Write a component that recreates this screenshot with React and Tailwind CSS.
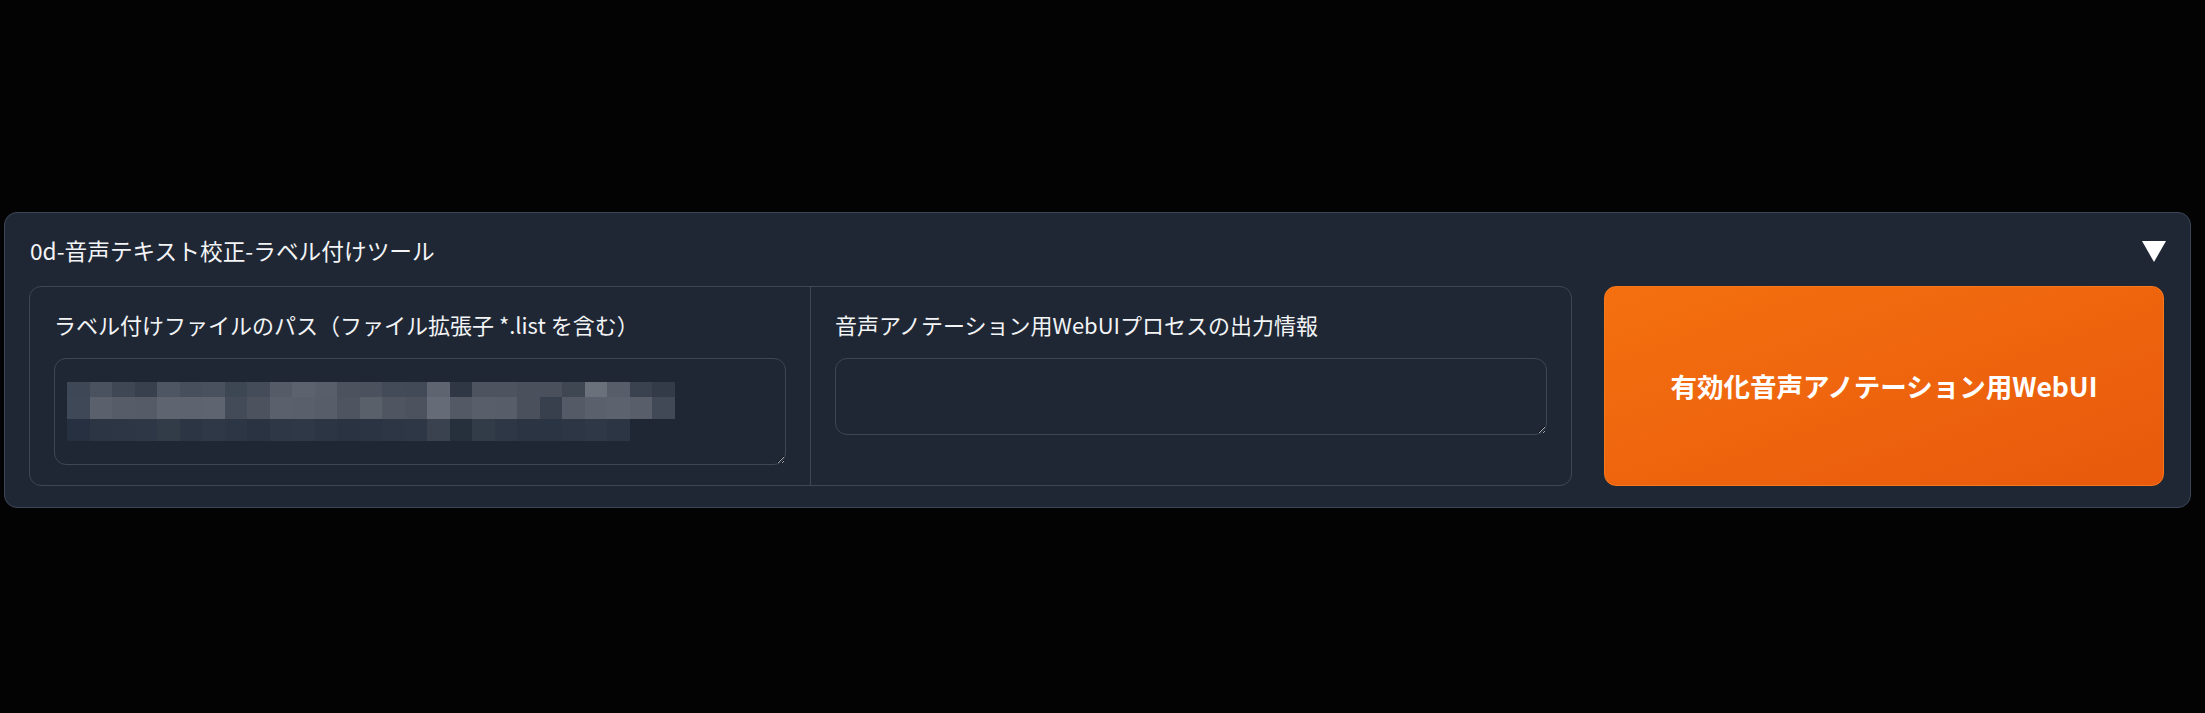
import React from "react";

const row1 = ["#3e4755","#4b525f","#3f4755","#37404c","#4f5663","#474f5c","#4a515e","#3d4653","#444c59","#555c68","#5c636e","#585f6a","#4c535f","#4b525e","#444b58","#434a57","#5e6570","#2f3744","#4d5460","#4d5460","#4a515d","#4a515d","#3f4753","#6b717b","#575e69","#3a4250","#333b48"];
const row2 = ["#3f4856","#5a616c","#565d68","#555c67","#5e6570","#5d646f","#5e6570","#434b58","#4c535f","#5a616c","#595f6b","#575e69","#4e5561","#5a6069","#4f5662","#4c535f","#666c77","#535a66","#585f6a","#575e69","#4a515d","#37404c","#545b67","#5a616c","#5c636e","#595f6a","#414957"];
const row3 = ["#273040","#2c3543","#2d3644","#2e3745","#323b48","#2c3543","#2f3846","#2d3644","#2a3341","#2e3745","#2f3846","#2c3543","#2a3341","#2b3442","#2d3644","#2e3745","#3a4250","#262f3c","#323b48","#2e3745","#2b3442","#2b3442","#2d3644","#2f3846","#2c3543"];

const font = { fontFamily: '"Noto Sans CJK JP", "Noto Sans", sans-serif' };

function Mosaic() {
  // pixelated (hidden) file path
  const rows = [
    { cells: row1, h: "h-[15px]" },
    { cells: row2, h: "h-[22px]" },
    { cells: row3, h: "h-[22px]" },
  ];
  return (
    <div className="pointer-events-none absolute left-[13px] top-[24px] flex flex-col">
      {rows.map((r, i) => (
        <div key={i} className={"flex " + r.h}>
          {r.cells.map((c, j) => (
            <div key={j} className="h-full w-[22.5px]" style={{ backgroundColor: c }} />
          ))}
        </div>
      ))}
    </div>
  );
}

export default function App() {
  return (
    <div className="h-[713px] w-full bg-[#030304] pl-[4px] pr-[14px] pt-[212px]" style={font}>
      <div className="rounded-[13px] border border-[#3d4757] bg-[#1f2735] pl-[24px] pr-[26px] pt-[22px] pb-[21px]">
        <div className="flex h-[32px] items-center justify-between">
          <span className="pl-[1px] text-[22.7px] leading-none text-[#f3f4f6]">0d-音声テキスト校正-ラベル付けツール</span>
          <svg width="24" height="21" viewBox="0 0 24 21" className="mr-[-2px]">
            <polygon points="0,0 24,0 12,21" fill="#ffffff" />
          </svg>
        </div>

        <div className="mt-[19px] flex gap-[32px]">
          <div className="flex h-[200px] flex-1 rounded-[12px] border border-[#3d4757] bg-[#1f2735]">
            <div className="flex w-[781px] flex-col border-r border-[#3d4757] px-[24px] pt-[22px]">
              <label className="h-[30px] text-[22px] leading-[30px] text-[#f3f4f6]">
                ラベル付けファイルのパス（ファイル拡張子 *.list を含む）
              </label>
              <div className="relative mt-[19px]">
                <textarea
                  readOnly
                  className="block h-[107px] w-full resize-y rounded-[12px] border border-[#3d4757] bg-[#1f2735] outline-none [color-scheme:dark]"
                />
                <Mosaic />
              </div>
            </div>
            <div className="flex flex-1 flex-col px-[24px] pt-[22px]">
              <label className="h-[30px] text-[22px] leading-[30px] text-[#f3f4f6]">
                音声アノテーション用WebUIプロセスの出力情報
              </label>
              <textarea
                readOnly
                className="mt-[19px] block h-[77px] w-full resize-y rounded-[12px] border border-[#3d4757] bg-[#1f2735] outline-none [color-scheme:dark]"
              />
            </div>
          </div>

          <button className="flex h-[200px] w-[560px] items-center justify-center rounded-[12px] border border-[#f5781c] bg-linear-to-br from-[#f4700f] to-[#e8590c] text-[26.5px] font-bold text-white">
            有効化音声アノテーション用WebUI
          </button>
        </div>
      </div>
    </div>
  );
}
